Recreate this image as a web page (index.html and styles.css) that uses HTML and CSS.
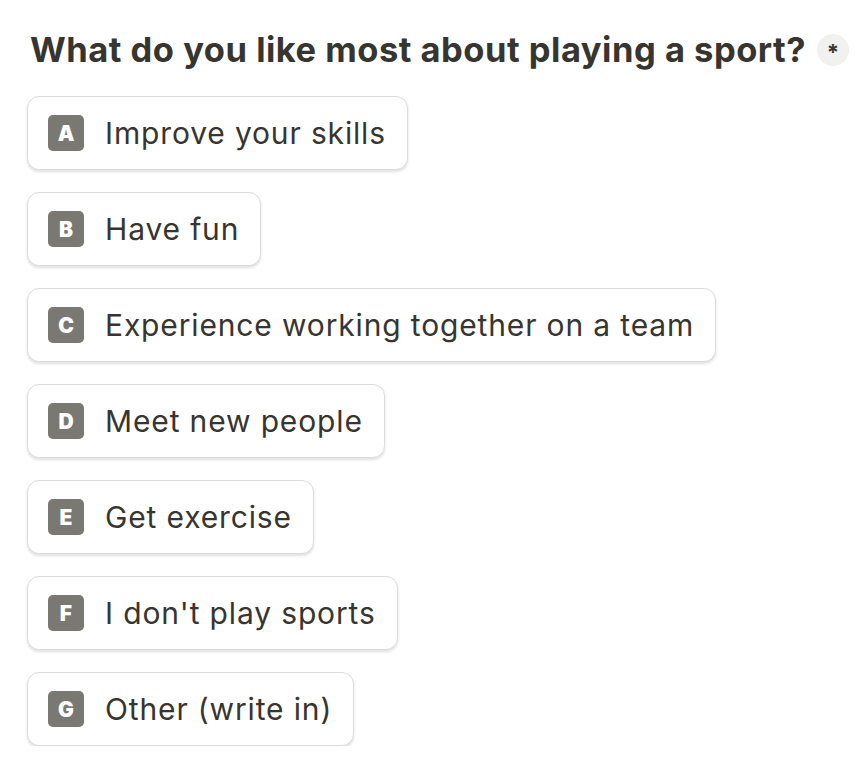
FILE: index.html
```html
<!DOCTYPE html>
<html lang="en">
<head>
<meta charset="utf-8">
<title>Question</title>
<link rel="stylesheet" href="styles.css">
</head>
<body>
<div class="question">
  <h1 class="title">What do you like most about playing a sport? <span class="req">*</span></h1>
  <ul class="options">
    <li class="option"><span class="key">A</span><span class="label">Improve your skills</span></li>
    <li class="option"><span class="key">B</span><span class="label">Have fun</span></li>
    <li class="option"><span class="key">C</span><span class="label">Experience working together on a team</span></li>
    <li class="option"><span class="key">D</span><span class="label">Meet new people</span></li>
    <li class="option"><span class="key">E</span><span class="label">Get exercise</span></li>
    <li class="option"><span class="key">F</span><span class="label">I don't play sports</span></li>
    <li class="option"><span class="key">G</span><span class="label">Other (write in)</span></li>
  </ul>
</div>
</body>
</html>
```
FILE: styles.css
```css
html, body {
  margin: 0;
  padding: 0;
  background: #ffffff;
}
body {
  font-family: Inter, "Noto Sans", sans-serif;
  color: #37352f;
}
.question {
  padding: 30px 0 0 27px;
}
.title {
  margin: 0 0 0 3px;
  font-size: 34.5px;
  letter-spacing: 0.5px;
  line-height: 40px;
  font-weight: 700;
  color: #37352f;
  display: flex;
  align-items: center;
  white-space: nowrap;
}
.req {
  display: inline-flex;
  align-items: center;
  justify-content: center;
  width: 32px;
  height: 32px;
  border-radius: 50%;
  background: #f1f1ef;
  font-size: 22px;
  font-weight: 700;
  letter-spacing: 0;
  margin-left: 11px;
  padding-top: 3px;
  box-sizing: border-box;
}
.options {
  list-style: none;
  margin: 26px 0 0 0;
  padding: 0;
  display: flex;
  flex-direction: column;
  align-items: flex-start;
  gap: 22px;
}
.option {
  display: flex;
  align-items: center;
  gap: 21px;
  padding: 18px 21px 18px 20px;
  border: 1px solid #dcdcda;
  border-radius: 12px;
  box-shadow: 0 2px 3px rgba(0, 0, 0, 0.12);
  background: #fff;
}
.key {
  display: inline-flex;
  align-items: center;
  justify-content: center;
  width: 36px;
  height: 36px;
  border-radius: 5px;
  background: #7a7873;
  color: #fff;
  font-size: 21px;
  font-weight: 900;
}
.label {
  font-size: 30px;
  letter-spacing: 0.85px;
  line-height: 36px;
  color: #37352f;
}
```
